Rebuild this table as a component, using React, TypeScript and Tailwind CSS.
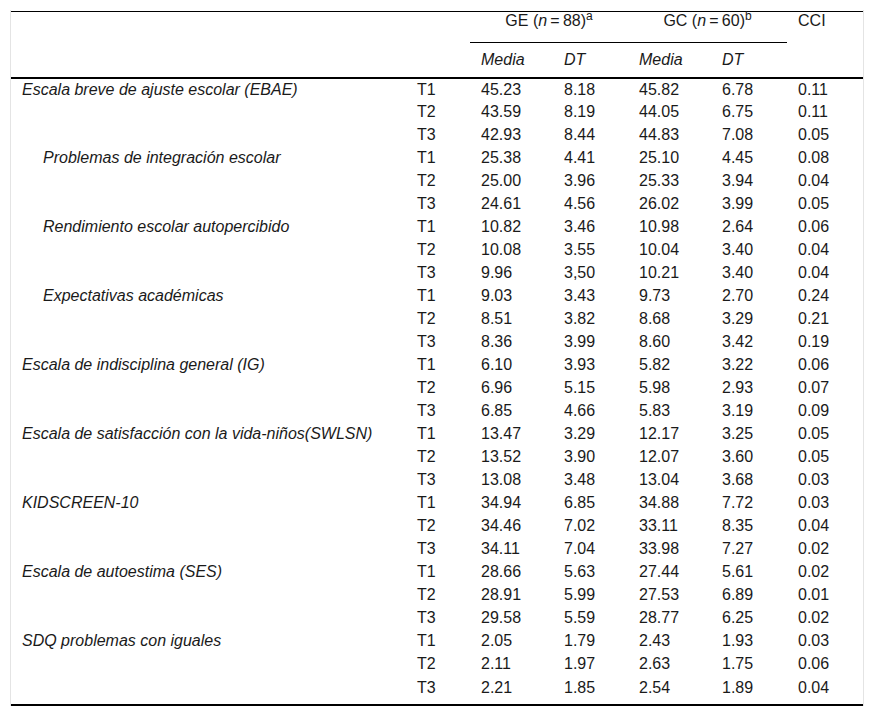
import React from 'react';

type Group = { label: string; indent?: boolean; rows: string[][] };

const groups: Group[] = [
  {
    label: 'Escala breve de ajuste escolar (EBAE)',
    rows: [
      ['45.23', '8.18', '45.82', '6.78', '0.11'],
      ['43.59', '8.19', '44.05', '6.75', '0.11'],
      ['42.93', '8.44', '44.83', '7.08', '0.05'],
    ],
  },
  {
    label: 'Problemas de integración escolar',
    indent: true,
    rows: [
      ['25.38', '4.41', '25.10', '4.45', '0.08'],
      ['25.00', '3.96', '25.33', '3.94', '0.04'],
      ['24.61', '4.56', '26.02', '3.99', '0.05'],
    ],
  },
  {
    label: 'Rendimiento escolar autopercibido',
    indent: true,
    rows: [
      ['10.82', '3.46', '10.98', '2.64', '0.06'],
      ['10.08', '3.55', '10.04', '3.40', '0.04'],
      ['9.96', '3,50', '10.21', '3.40', '0.04'],
    ],
  },
  {
    label: 'Expectativas académicas',
    indent: true,
    rows: [
      ['9.03', '3.43', '9.73', '2.70', '0.24'],
      ['8.51', '3.82', '8.68', '3.29', '0.21'],
      ['8.36', '3.99', '8.60', '3.42', '0.19'],
    ],
  },
  {
    label: 'Escala de indisciplina general (IG)',
    rows: [
      ['6.10', '3.93', '5.82', '3.22', '0.06'],
      ['6.96', '5.15', '5.98', '2.93', '0.07'],
      ['6.85', '4.66', '5.83', '3.19', '0.09'],
    ],
  },
  {
    label: 'Escala de satisfacción con la vida-niños(SWLSN)',
    rows: [
      ['13.47', '3.29', '12.17', '3.25', '0.05'],
      ['13.52', '3.90', '12.07', '3.60', '0.05'],
      ['13.08', '3.48', '13.04', '3.68', '0.03'],
    ],
  },
  {
    label: 'KIDSCREEN-10',
    rows: [
      ['34.94', '6.85', '34.88', '7.72', '0.03'],
      ['34.46', '7.02', '33.11', '8.35', '0.04'],
      ['34.11', '7.04', '33.98', '7.27', '0.02'],
    ],
  },
  {
    label: 'Escala de autoestima (SES)',
    rows: [
      ['28.66', '5.63', '27.44', '5.61', '0.02'],
      ['28.91', '5.99', '27.53', '6.89', '0.01'],
      ['29.58', '5.59', '28.77', '6.25', '0.02'],
    ],
  },
  {
    label: 'SDQ problemas con iguales',
    rows: [
      ['2.05', '1.79', '2.43', '1.93', '0.03'],
      ['2.11', '1.97', '2.63', '1.75', '0.06'],
      ['2.21', '1.85', '2.54', '1.89', '0.04'],
    ],
  },
];

const cell = 'px-[11px] text-left align-middle font-normal';

export default function App() {
  return (
    <div className="w-[874px] h-[716px] bg-white pt-[10px] text-[16px] leading-[18px] text-[#1a1a1a] font-['Liberation_Sans',Arial,sans-serif]">
      <div className="ml-[10px] w-[854px] border-x border-[#e4e4e4] pt-px">
        <table className="w-[852px] table-fixed border-collapse border-t border-black">
          <colgroup>
            <col className="w-[395px]" />
            <col className="w-[64px]" />
            <col className="w-[83px]" />
            <col className="w-[75px]" />
            <col className="w-[83px]" />
            <col className="w-[76px]" />
            <col className="w-[76px]" />
          </colgroup>
          <thead>
            <tr className="h-[31px]">
              <th className={cell} />
              <th className={cell} />
              <th colSpan={2} className="px-[11px] text-center align-top pt-0 font-normal border-b border-black">
                GE (<i>n</i>{'\u2009'}={'\u2009'}88)<sup className="text-[12px]">a</sup>
              </th>
              <th colSpan={2} className="px-[11px] text-center align-top pt-0 font-normal border-b border-black">
                GC (<i>n</i>{'\u2009'}={'\u2009'}60)<sup className="text-[12px]">b</sup>
              </th>
              <th className="px-[11px] text-left align-top pt-0 font-normal">CCI</th>
            </tr>
            <tr className="h-[35px] border-b-2 border-black">
              <th className={cell} />
              <th className={cell} />
              <th className={`${cell} italic`}>Media</th>
              <th className={`${cell} italic`}>DT</th>
              <th className={`${cell} italic`}>Media</th>
              <th className={`${cell} italic`}>DT</th>
              <th className={cell} />
            </tr>
          </thead>
          <tbody className="border-b-2 border-black">
            {groups.flatMap((g, gi) =>
              g.rows.map((r, ri) => {
                const last = gi === groups.length - 1 && ri === 2;
                const lastCls = last ? 'align-top pt-[3px]' : '';
                return (
                  <tr key={`${gi}-${ri}`} className={last ? 'h-[29px]' : 'h-[23px]'}>
                    <td className={`${cell} italic ${g.indent ? 'pl-[32px]' : ''} ${lastCls}`}>
                      {ri === 0 ? g.label : ''}
                    </td>
                    <td className={`${cell} ${lastCls}`}>T{ri + 1}</td>
                    {r.map((v, vi) => (
                      <td key={vi} className={`${cell} ${lastCls}`}>
                        {v}
                      </td>
                    ))}
                  </tr>
                );
              })
            )}
          </tbody>
        </table>
      </div>
    </div>
  );
}
